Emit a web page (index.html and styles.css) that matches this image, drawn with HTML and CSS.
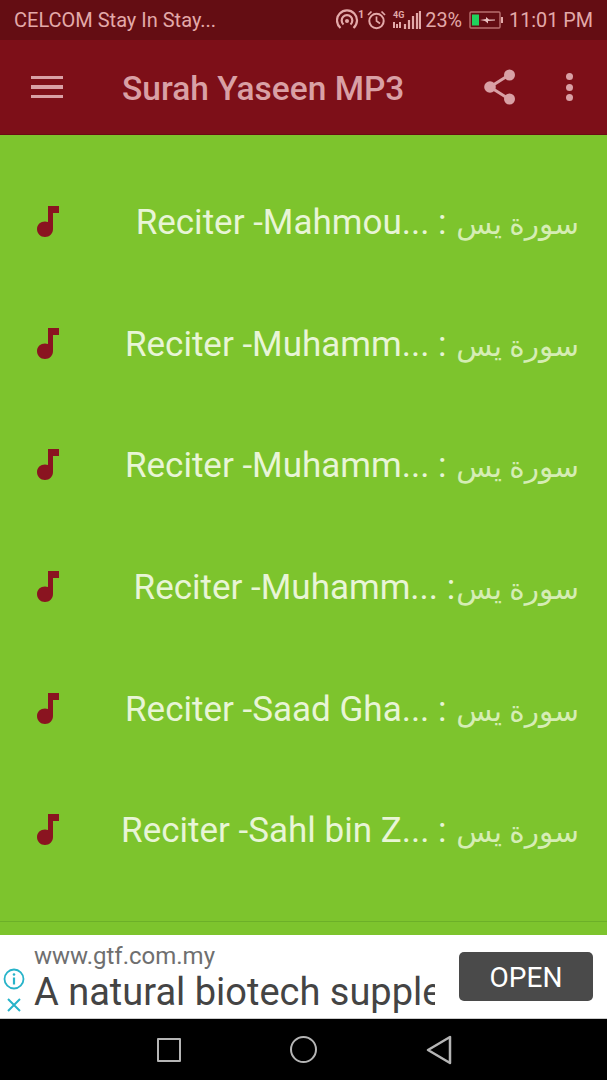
FILE: index.html
```html
<!DOCTYPE html>
<html lang="en">
<head>
    <meta charset="UTF-8">
    <meta name="viewport" content="width=device-width, initial-scale=1.0">
    <title>Surah Yaseen MP3</title>
    <link rel="stylesheet" href="styles.css">
</head>
<body>

    <svg class="icon-defs" width="0" height="0">
        <symbol id="note" viewBox="0 0 22 31">
            <path d="M11 0H22V7H16V23C16 27.500 12.500 31 8 31C3.500 31 0 27.500 0 23C0 18.500 3.500 15.500 8 15.500C9 15.500 10 15.700 11 16Z"/>
        </symbol>
    </svg>

    <div class="status-bar">
        <span class="carrier">CELCOM Stay In Stay...</span>
        <div class="status-right">
            <svg class="st-hotspot" width="28" height="24" viewBox="0 0 28 24">
                <path d="M4.500 20A10 10 0 1 1 17.500 20M7.500 16.500A5.300 5.300 0 1 1 14.500 16.500" fill="none" stroke="#e3a9a9" stroke-width="2.200"/>
                <circle cx="11" cy="13" r="2" fill="#e3a9a9"/>
                <text x="22" y="10" class="st-one">1</text>
            </svg>
            <svg class="st-alarm" width="19" height="24" viewBox="0 0 19 24">
                <circle cx="9.500" cy="13" r="7.200" fill="none" stroke="#e3a9a9" stroke-width="2"/>
                <path d="M9.500 8.500V13L13 15.500M1 7L4.500 3.500M18 7L14.500 3.500" fill="none" stroke="#e3a9a9" stroke-width="1.700"/>
            </svg>
            <svg class="st-signal" width="29" height="24" viewBox="0 0 29 24">
                <text x="1" y="10" class="st-4g">4G</text>
                <path d="M2 14V20M5 16V20M8 14V20" stroke="#e3a9a9" stroke-width="2"/>
                <path d="M13 16V21M17 12V21M21 8V21M25 5V21M28 3V21" stroke="#e3a9a9" stroke-width="2.200"/>
            </svg>
            <span class="battery-pct">23%</span>
            <svg class="st-battery" width="34" height="18" viewBox="0 0 34 18">
                <rect x="1" y="1" width="30" height="16" rx="1" fill="none" stroke="#b86f6f" stroke-width="1.400"/>
                <rect x="3" y="3.500" width="7" height="11" fill="#1fd35c"/>
                <path d="M11 9L17 8V6L20 8.500H26V9.500L19 10V12.500L16 10Z" fill="#e8c0c0"/>
                <rect x="32" y="6" width="2" height="6" fill="#e3a9a9"/>
            </svg>
            <span class="clock">11:01 PM</span>
        </div>
    </div>

    <div class="toolbar">
        <div class="hamburger"><span></span><span></span><span></span></div>
        <h1 class="title">Surah Yaseen MP3</h1>
        <svg class="share" width="32" height="36" viewBox="0 0 32 36">
            <path d="M25 6L6 18L25 30" fill="none" stroke="#d9a0a5" stroke-width="3"/>
            <circle cx="25.500" cy="6" r="5.500" fill="#d9a0a5"/>
            <circle cx="6" cy="18" r="5.800" fill="#d9a0a5"/>
            <circle cx="25.500" cy="30" r="5.500" fill="#d9a0a5"/>
        </svg>
        <div class="dots"><span></span><span></span><span></span></div>
    </div>

    <div class="list-area">
        <ul class="track-list">
            <li class="track">
                <svg class="note"><use href="#note"/></svg>
                <span class="track-name">Reciter -Mahmou... : <span class="arabic">سورة يس</span></span>
            </li>
            <li class="track">
                <svg class="note"><use href="#note"/></svg>
                <span class="track-name">Reciter -Muhamm... : <span class="arabic">سورة يس</span></span>
            </li>
            <li class="track">
                <svg class="note"><use href="#note"/></svg>
                <span class="track-name">Reciter -Muhamm... : <span class="arabic">سورة يس</span></span>
            </li>
            <li class="track">
                <svg class="note"><use href="#note"/></svg>
                <span class="track-name">Reciter -Muhamm... :<span class="arabic">سورة يس</span></span>
            </li>
            <li class="track">
                <svg class="note"><use href="#note"/></svg>
                <span class="track-name">Reciter -Saad Gha... : <span class="arabic">سورة يس</span></span>
            </li>
            <li class="track">
                <svg class="note"><use href="#note"/></svg>
                <span class="track-name">Reciter -Sahl bin Z... : <span class="arabic">سورة يس</span></span>
            </li>
        </ul>
    </div>

    <div class="ad-banner">
        <div class="ad-controls">
            <svg width="22" height="22" viewBox="0 0 22 22">
                <circle cx="11" cy="11" r="9.500" fill="none" stroke="#27b3c9" stroke-width="1.800"/>
                <path d="M11 9.500V16.500" stroke="#27b3c9" stroke-width="2.200"/>
                <circle cx="11" cy="6.500" r="1.300" fill="#27b3c9"/>
            </svg>
            <svg width="16" height="16" viewBox="0 0 16 16">
                <path d="M2 2L14 14M14 2L2 14" stroke="#27b3c9" stroke-width="2"/>
            </svg>
        </div>
        <div class="ad-copy">
            <div class="ad-url">www.gtf.com.my</div>
            <div class="ad-headline">A natural biotech supple</div>
        </div>
        <button class="ad-open">OPEN</button>
    </div>

    <div class="nav-bar">
        <div class="nav-square"></div>
        <div class="nav-circle"></div>
        <svg width="26" height="30" viewBox="0 0 26 30">
            <path d="M24 2V28L2 15Z" fill="none" stroke="#b5b5b5" stroke-width="2.500" stroke-linejoin="round"/>
        </svg>
    </div>

</body>
</html>
```

FILE: styles.css
```css
html, body {
    height: 100%;
}

body {
    margin: 0;
    font-family: Roboto, "DejaVu Sans", sans-serif;
    display: flex;
    flex-direction: column;
    height: 1080px;
    overflow: hidden;
    background: #000;
}

.icon-defs {
    position: absolute;
}

/* Status bar */
.status-bar {
    height: 40px;
    flex: none;
    background: #640d13;
    color: #e3a9a9;
    display: flex;
    align-items: center;
    justify-content: space-between;
    padding: 0 14px;
    font-size: 19.8px;
}

.carrier {
    font-size: 20px;
}

.status-right {
    display: flex;
    align-items: center;
}

.st-alarm {
    margin-left: 3px;
}

.st-signal {
    margin-left: 6px;
}

.st-one {
    font-size: 11px;
    font-weight: 700;
    fill: #e3a9a9;
}

.st-4g {
    font-size: 9px;
    font-weight: 700;
    fill: #e3a9a9;
}

.battery-pct {
    margin-left: 4px;
}

.st-battery {
    margin-left: 7px;
}

.clock {
    margin-left: 6px;
}

/* Toolbar */
.toolbar {
    height: 95px;
    flex: none;
    box-sizing: border-box;
    background: #7d0f18;
    border-bottom: 1px solid #6a0d14;
    display: flex;
    align-items: center;
    padding: 0 31px;
}

.hamburger {
    display: flex;
    flex-direction: column;
    gap: 6px;
    width: 32px;
}

.hamburger span {
    height: 3.500px;
    background: #d9a0a5;
}

.title {
    margin: 3px 0 0 59px;
    flex: 1;
    font-size: 33.5px;
    font-weight: 500;
    color: #d9a0a5;
}

.share {
    margin-right: 46px;
}

.dots {
    display: flex;
    flex-direction: column;
    gap: 3.500px;
    width: 14px;
    align-items: center;
}

.dots span {
    width: 7px;
    height: 7px;
    border-radius: 50%;
    background: #d9a0a5;
}

/* List */
.list-area {
    height: 800px;
    flex: none;
    box-sizing: border-box;
    background: #7dc42d;
    padding-top: 26px;
    position: relative;
}

.list-area::after {
    content: "";
    position: absolute;
    left: 0;
    right: 0;
    bottom: 13px;
    height: 1px;
    background: #6cb028;
}

.track-list {
    list-style: none;
    margin: 0;
    padding: 0;
}

.track {
    height: 121.6px;
    display: flex;
    align-items: center;
    justify-content: space-between;
    padding: 0 28px 0 37px;
}

.note {
    width: 22px;
    height: 31px;
    fill: #8a1420;
}

.track-name {
    padding-top: 2px;
    font-size: 35px;
    color: #e8f5d6;
    white-space: nowrap;
}

.arabic {
    font-size: 29.5px;
    color: #d5edb4;
    margin-left: 1px;
}

/* Ad banner */
.ad-banner {
    height: 84px;
    flex: none;
    box-sizing: border-box;
    background: #fff;
    border-bottom: 1px solid #ccc;
    display: flex;
    align-items: center;
}

.ad-controls {
    width: 28px;
    margin-right: 6px;
    flex: none;
    align-self: flex-end;
    display: flex;
    flex-direction: column;
    align-items: center;
    gap: 7px;
    padding-bottom: 5px;
}

.ad-copy {
    width: 401px;
    flex: none;
    padding-top: 2px;
    overflow: hidden;
    white-space: nowrap;
}

.ad-url {
    font-size: 24px;
    line-height: 28px;
    color: #6f6f6f;
}

.ad-headline {
    font-size: 38px;
    line-height: 44px;
    color: #444;
}

.ad-open {
    width: 134px;
    height: 49px;
    margin-left: 24px;
    margin-bottom: 1px;
    padding-top: 4px;
    border: none;
    border-radius: 5px;
    background: #4a4a4a;
    color: #fff;
    font-family: Roboto, sans-serif;
    font-size: 28px;
    font-weight: 400;
}

/* Nav bar */
.nav-bar {
    flex: 1;
    background: #000;
    display: flex;
    align-items: center;
    justify-content: center;
    gap: 109px;
    padding-left: 1px;
}

.nav-square {
    width: 20px;
    height: 20px;
    border: 2.500px solid #b5b5b5;
    border-radius: 1px;
}

.nav-circle {
    width: 23px;
    height: 23px;
    border: 2.500px solid #b5b5b5;
    border-radius: 50%;
}
```
